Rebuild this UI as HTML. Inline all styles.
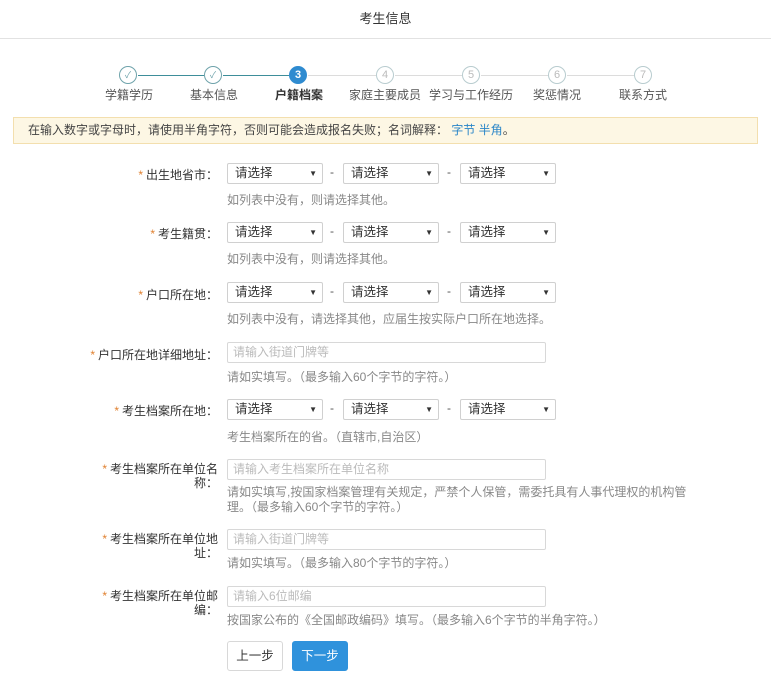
<!DOCTYPE html>
<html><head><meta charset="utf-8">
<style>
*{margin:0;padding:0;box-sizing:border-box}
body{width:771px;height:677px;background:#fff;position:relative;overflow:hidden;font-family:"Liberation Sans","Noto Sans CJK SC",sans-serif;font-size:12px;color:#333}
.a{position:absolute;white-space:nowrap}
.hdr{left:0;top:0;width:771px;height:39px;border-bottom:1px solid #e2e2e2;text-align:center;line-height:38px;font-size:13px;color:#333}
.c{position:absolute;width:18px;height:18px;border-radius:50%;border:1px solid #b8cccf;color:#bbb;font-size:11px;text-align:center;line-height:16px;top:66px;background:#fff}
.c.done{border-color:#6fa3ab;color:#6fa3ab;font-size:9px}
.c.cur{background:#2f8bd0;border-color:#2f8bd0;color:#fff;font-weight:bold}
.ln{position:absolute;top:75px;height:1px;background:#dcdcdc}
.ln.d{background:#3e8e9a}
.sl{top:86px;font-size:12px;color:#555;text-align:center;width:90px}
.note{left:13px;top:117px;width:745px;height:27px;background:#fdf7e4;border:1px solid #f3dfae;padding-left:14px;line-height:25px;color:#444}
.note span{color:#2a86c8}
.lb{text-align:right;width:140px;color:#333}
.lb b{color:#e08030;font-weight:normal;margin-right:3px}
.sel{position:absolute;width:96px;height:21px;border:1px solid #d0d0d0;border-radius:2px;padding-left:7px;line-height:19px;color:#333;font-size:12.5px;background:#fff}
.sel:after{content:"▼";position:absolute;right:5px;top:0;font-size:8px;color:#333}
.dash{color:#555}
.inp{position:absolute;left:227px;width:319px;height:21px;border:1px solid #d8d8d8;border-radius:2px;padding-left:5px;line-height:19px;color:#bbb}
.h{left:227px;color:#888;font-size:12px}
.btn{position:absolute;top:641px;height:30px;width:56px;border-radius:3px;text-align:center;line-height:28px;font-size:12.5px}
</style></head><body>
<div class="a hdr">考生信息</div>

<div class="ln d" style="left:138px;width:66px"></div>
<div class="ln d" style="left:223px;width:66px"></div>
<div class="ln" style="left:308px;width:68px"></div>
<div class="ln" style="left:395px;width:67px"></div>
<div class="ln" style="left:481px;width:67px"></div>
<div class="ln" style="left:567px;width:67px"></div>
<div class="c done" style="left:119px">✓</div>
<div class="c done" style="left:204px">✓</div>
<div class="c cur" style="left:289px">3</div>
<div class="c" style="left:376px">4</div>
<div class="c" style="left:462px">5</div>
<div class="c" style="left:548px">6</div>
<div class="c" style="left:634px">7</div>
<div class="a sl" style="left:84px">学籍学历</div>
<div class="a sl" style="left:169px">基本信息</div>
<div class="a sl" style="left:254px;font-weight:bold;color:#333">户籍档案</div>
<div class="a sl" style="left:340px">家庭主要成员</div>
<div class="a sl" style="left:426px">学习与工作经历</div>
<div class="a sl" style="left:512px">奖惩情况</div>
<div class="a sl" style="left:598px">联系方式</div>

<div class="a note">在输入数字或字母时，请使用半角字符，否则可能会造成报名失败；名词解释： <span>字节 半角</span>。</div>

<div class="a lb" style="left:78px;top:166px"><b>*</b>出生地省市：</div>
<div class="sel" style="left:227px;top:163px">请选择</div><div class="a dash" style="left:330px;top:165px">-</div>
<div class="sel" style="left:343px;top:163px">请选择</div><div class="a dash" style="left:447px;top:165px">-</div>
<div class="sel" style="left:460px;top:163px">请选择</div>
<div class="a h" style="top:191px">如列表中没有，则请选择其他。</div>

<div class="a lb" style="left:78px;top:225px"><b>*</b>考生籍贯：</div>
<div class="sel" style="left:227px;top:222px">请选择</div><div class="a dash" style="left:330px;top:224px">-</div>
<div class="sel" style="left:343px;top:222px">请选择</div><div class="a dash" style="left:447px;top:224px">-</div>
<div class="sel" style="left:460px;top:222px">请选择</div>
<div class="a h" style="top:250px">如列表中没有，则请选择其他。</div>

<div class="a lb" style="left:78px;top:286px"><b>*</b>户口所在地：</div>
<div class="sel" style="left:227px;top:282px">请选择</div><div class="a dash" style="left:330px;top:284px">-</div>
<div class="sel" style="left:343px;top:282px">请选择</div><div class="a dash" style="left:447px;top:284px">-</div>
<div class="sel" style="left:460px;top:282px">请选择</div>
<div class="a h" style="top:310px">如列表中没有，请选择其他，应届生按实际户口所在地选择。</div>

<div class="a lb" style="left:78px;top:346px"><b>*</b>户口所在地详细地址：</div>
<div class="inp" style="top:342px">请输入街道门牌等</div>
<div class="a h" style="top:368px">请如实填写。（最多输入60个字节的字符。）</div>

<div class="a lb" style="left:78px;top:402px"><b>*</b>考生档案所在地：</div>
<div class="sel" style="left:227px;top:399px">请选择</div><div class="a dash" style="left:330px;top:401px">-</div>
<div class="sel" style="left:343px;top:399px">请选择</div><div class="a dash" style="left:447px;top:401px">-</div>
<div class="sel" style="left:460px;top:399px">请选择</div>
<div class="a h" style="top:428px">考生档案所在的省。（直辖市,自治区）</div>

<div class="a lb" style="left:78px;top:462px;line-height:14px"><b>*</b>考生档案所在单位名<br>称：</div>
<div class="inp" style="top:459px">请输入考生档案所在单位名称</div>
<div class="a h" style="top:485px;line-height:15px">请如实填写,按国家档案管理有关规定，严禁个人保管，需委托具有人事代理权的机构管<br>理。（最多输入60个字节的字符。）</div>

<div class="a lb" style="left:78px;top:532px;line-height:14px"><b>*</b>考生档案所在单位地<br>址：</div>
<div class="inp" style="top:529px">请输入街道门牌等</div>
<div class="a h" style="top:554px">请如实填写。（最多输入80个字节的字符。）</div>

<div class="a lb" style="left:78px;top:589px;line-height:14px"><b>*</b>考生档案所在单位邮<br>编：</div>
<div class="inp" style="top:586px">请输入6位邮编</div>
<div class="a h" style="top:611px">按国家公布的《全国邮政编码》填写。（最多输入6个字节的半角字符。）</div>

<div class="btn" style="left:227px;border:1px solid #d8d8d8;color:#333;background:#fff">上一步</div>
<div class="btn" style="left:292px;background:#2f92dc;color:#fff;border:1px solid #2f92dc">下一步</div>
</body></html>
